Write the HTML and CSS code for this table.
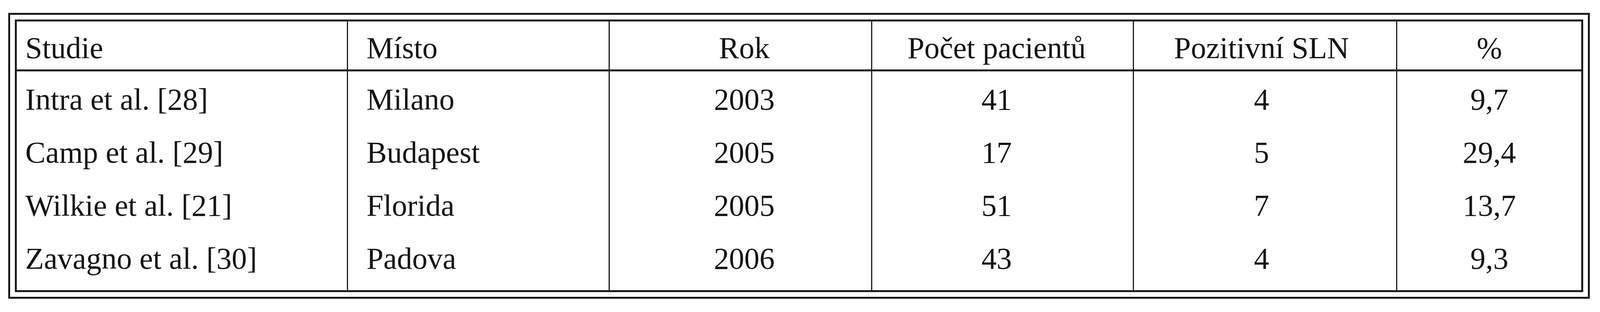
FILE: index.html
```html
<!DOCTYPE html>
<html lang="cs">
<head>
<meta charset="utf-8">
<title>Studie</title>
<link rel="stylesheet" href="styles.css">
</head>
<body>
<div class="sheet">
  <div class="grid" role="table">
    <div class="cell head col1">Studie</div>
    <div class="cell head col2 sep">Místo</div>
    <div class="cell head col3 sep">Rok</div>
    <div class="cell head col4 sep">Počet pacientů</div>
    <div class="cell head col5 sep">Pozitivní SLN</div>
    <div class="cell head col6 sep">%</div>

    <div class="cell col1">Intra et al. [28]</div>
    <div class="cell col2 sep">Milano</div>
    <div class="cell col3 sep">2003</div>
    <div class="cell col4 sep">41</div>
    <div class="cell col5 sep">4</div>
    <div class="cell col6 sep">9,7</div>

    <div class="cell col1">Camp et al. [29]</div>
    <div class="cell col2 sep">Budapest</div>
    <div class="cell col3 sep">2005</div>
    <div class="cell col4 sep">17</div>
    <div class="cell col5 sep">5</div>
    <div class="cell col6 sep">29,4</div>

    <div class="cell col1">Wilkie et al. [21]</div>
    <div class="cell col2 sep">Florida</div>
    <div class="cell col3 sep">2005</div>
    <div class="cell col4 sep">51</div>
    <div class="cell col5 sep">7</div>
    <div class="cell col6 sep">13,7</div>

    <div class="cell last col1">Zavagno et al. [30]</div>
    <div class="cell last col2 sep">Padova</div>
    <div class="cell last col3 sep">2006</div>
    <div class="cell last col4 sep">43</div>
    <div class="cell last col5 sep">4</div>
    <div class="cell last col6 sep">9,3</div>
  </div>
</div>
</body>
</html>
```
FILE: styles.css
```css
html, body {
  margin: 0;
  padding: 0;
  background: #ffffff;
}

/* outer frame of the double rule: 28px from the left, 34px from the right at 5356px */
.sheet {
  margin: 33px 0.635vw 0 0.523vw;
  border: 5px solid #1a1a1a;
  padding: 12px;
}

.grid {
  display: grid;
  grid-template-columns: 1107fr 878fr 882fr 878fr 884fr 621fr;
  border: 5px solid #1a1a1a;
}

.cell {
  box-sizing: border-box;
  min-width: 0;
  font-family: "Liberation Serif", "Times New Roman", serif;
  font-size: min(102px, 1.904vw);
  line-height: 102px;
  color: #141414;
  white-space: nowrap;
  padding-top: 21px;
  padding-bottom: 13px;
}

.head {
  padding-top: 17px;
  padding-bottom: 4px;
  border-bottom: 5px solid #1a1a1a;
}

.last {
  padding-bottom: 30px;
}

.sep {
  border-left: 3px solid #1a1a1a;
}

.col1 {
  padding-left: 0.523vw;
}

.col2 {
  padding-left: 1.158vw;
}

.col3 {
  text-align: center;
  padding-left: 0.485vw;
}

.col4 {
  text-align: center;
  padding-right: 0.747vw;
}

.col5 {
  text-align: center;
  padding-right: 0.448vw;
}

.col6 {
  text-align: center;
}
```
